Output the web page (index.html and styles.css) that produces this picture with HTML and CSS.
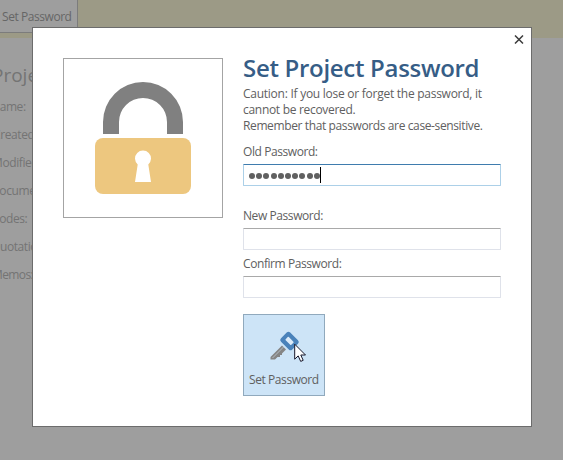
FILE: index.html
```html
<!DOCTYPE html>
<html lang="en">
<head>
<meta charset="utf-8">
<title>Set Project Password</title>
<link rel="stylesheet" href="styles.css">
</head>
<body>
<div class="backdrop">
  <div class="ribbon"><div class="tab">Set Password</div></div>
  <h2 class="page-title">Project</h2>
  <ul class="fields">
    <li class="f1">Name:</li><li class="f2">Created:</li><li class="f3">Modified:</li><li class="f4">Documents:</li><li class="f5">Codes:</li><li class="f6">Quotations:</li><li class="f7">Memos:</li>
  </ul>
</div>
<div class="dialog">
  <svg class="close" width="10" height="9" viewBox="0 0 10 9"><path d="M1 .5L9 8.500M9 .5L1 8.500" stroke="#3c3c3c" stroke-width="1.5"/></svg>
  <div class="picture">
    <svg width="158" height="158" viewBox="0 0 158 158">
      <path d="M39 75V63a40 40 0 0 1 80 0V75H103V63a24 24 0 0 0-48 0V75Z" fill="#808080"/>
      <rect x="31" y="79" width="96" height="56" rx="8" fill="#edc77f"/>
      <path d="M73.700 105.500a8 8 0 1 1 10.600 0L87 123H71Z" fill="#fff"/>
    </svg>
  </div>
  <form class="form">
    <h1><span>Set Project Password</span></h1>
    <p><span class="c1">Caution: If you lose or forget the password, it</span><br><span class="c2">cannot be recovered.</span><br><span class="c3">Remember that passwords are case-sensitive.</span></p>
    <label>Old Password:</label>
    <div class="input active"><span class="dots"><i></i><i></i><i></i><i></i><i></i><i></i><i></i><i></i><i></i><i></i></span><span class="caret"></span></div>
    <label class="new">New Password:</label>
    <div class="input"></div>
    <label class="confirm">Confirm Password:</label>
    <div class="input"></div>
    <div class="button">
      <svg width="80" height="80" viewBox="0 0 80 80">
        <path d="M26.500 42L38 30.500L42 34.500L38 38.500V40H36V42H33.500L31 44.500H26.500Z" fill="#858585"/>
        <path d="M28.500 43L39.500 32" stroke="#b5bdc4"/>
        <rect x="37.500" y="19.500" width="16" height="13" rx="2.500" transform="rotate(45 45.500 26)" fill="#4a82ba"/>
        <rect x="41.500" y="23.700" width="8" height="4.500" rx=".8" transform="rotate(45 45.500 26)" fill="#dcebf9"/>
      </svg>
      <span>Set Password</span>
    </div>
  </form>
</div>
<svg class="cursor" width="13" height="20" viewBox="0 0 13 20"><path d="M.7 1.200V16.200L4.200 12.900L6.700 18.400L9.200 17.300L6.800 12H11.500Z" fill="#fff" stroke="#17172b"/></svg>
</body>
</html>
```
FILE: styles.css
```css
* { box-sizing: border-box; }
body { margin: 0; width: 563px; height: 460px; overflow: hidden; position: relative; background: #9e9e9e; color: #606060; font: 12px/16px "Open Sans", "Noto Sans", sans-serif; }
.backdrop { height: 460px; color: #747474; overflow: hidden; }
.ribbon { height: 38px; background: #9c9a86; }
.tab { width: 78px; height: 33px; padding: 9px 0 0 2px; background: #9e9e9e; border-right: 1px solid #7c7c7c; border-bottom: 1px solid #7c7c7c; white-space: nowrap; letter-spacing: -.44px; color: #666; }
.page-title { margin: 22px 0 0 -8px; font-size: 19px; line-height: 30px; font-weight: 400; white-space: nowrap; }
.fields { list-style: none; margin: 3px 0 0; padding: 0; line-height: 28px; white-space: nowrap; letter-spacing: -.4px; }
.f1 { margin-left: -9px; }
.f2 { margin-left: -7px; }
.f3 { margin-left: -8px; }
.f4 { margin-left: -9px; }
.f5 { margin-left: -8px; }
.f6 { margin-left: -9px; }
.f7 { margin-left: -8px; letter-spacing: -.6px; }
.dialog { position: absolute; left: 32px; top: 27px; width: 500px; height: 400px; border: 1px solid #6c6c6c; background: #fff; display: flex; gap: 20px; padding: 30px; }
.close { position: absolute; right: 7px; top: 7px; }
.picture { width: 160px; height: 160px; border: 1px solid #a4a4a4; flex: none; }
.picture svg, .button svg { display: block; }
.form { width: 258px; margin-top: -4px; white-space: nowrap; }
h1 { margin: 0 0 4px; font-size: 24px; line-height: 28px; font-weight: 600; color: #365d86; letter-spacing: -.3px; }
p { margin: 0 0 10px; }
.c1 { letter-spacing: -.26px; }
.c2 { letter-spacing: -.3px; }
.c3 { letter-spacing: -.38px; }
label { display: block; margin-bottom: 4px; letter-spacing: -.42px; }
label.new { margin-top: 22px; }
label.confirm { margin-top: 6px; }
.input { height: 22px; border: 1px solid #dfe2ea; border-top-color: #a9a9a9; border-radius: 1px; display: flex; }
.input.active { border-color: #acd0e8; border-top-color: #3f7cae; }
.dots { display: flex; gap: 1.200px; padding: 8px 0 0 5px; }
.dots i { width: 6px; height: 6px; border-radius: 50%; background: #606060; }
.caret { width: 1px; height: 16px; margin-top: 2px; background: #000; }
.button { position: relative; margin-top: 16px; width: 82px; height: 82px; border: 1px solid #90a9bd; background: #cde4f7; }
.button span { position: absolute; left: 5px; top: 57px; letter-spacing: -.42px; }
.cursor { position: absolute; left: 294px; top: 343px; }
```
